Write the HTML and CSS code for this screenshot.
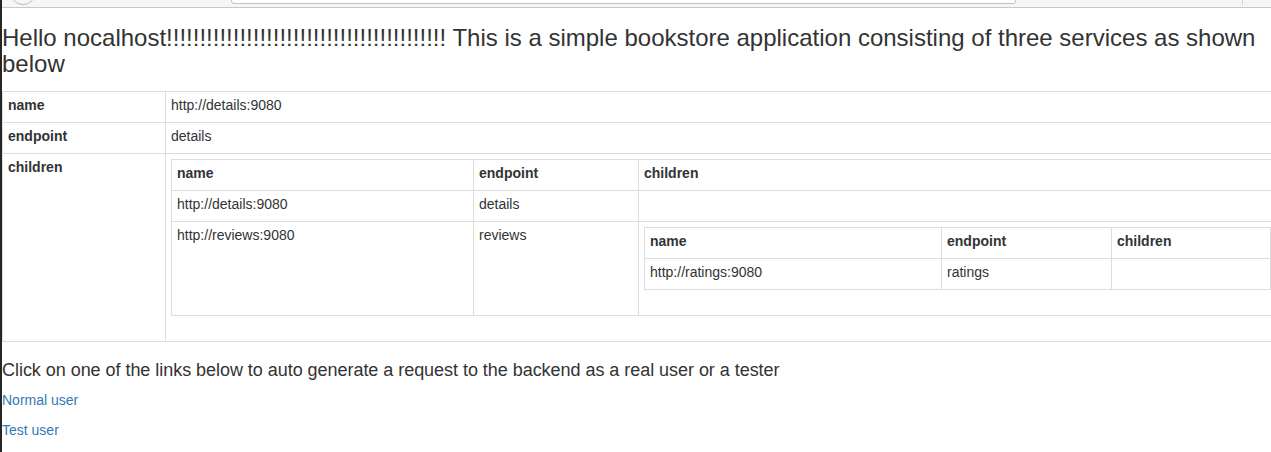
FILE: index.html
```html
<!DOCTYPE html>
<html>
<head>
<meta charset="utf-8">
<title>Bookstore</title>
<link rel="stylesheet" href="styles.css">
</head>
<body>
<div class="chrome">
  <span class="chrome-back"></span>
  <span class="chrome-url"></span>
  <span class="chrome-sep"></span>
</div>
<div class="edge"></div>
<main class="page">
  <h3 class="title">Hello nocalhost!!!!!!!!!!!!!!!!!!!!!!!!!!!!!!!!!!!!!!!!!! This is a simple bookstore application consisting of three services as shown below</h3>
  <table class="tbl outer">
    <tbody>
      <tr><th class="outer-key">name</th><td>http://details:9080</td></tr>
      <tr><th>endpoint</th><td>details</td></tr>
      <tr><th>children</th><td class="holder">
        <table class="tbl nested">
          <thead>
            <tr><th class="nested-c1">name</th><th class="nested-c2">endpoint</th><th>children</th></tr>
          </thead>
          <tbody>
            <tr><td>http://details:9080</td><td>details</td><td></td></tr>
            <tr><td>http://reviews:9080</td><td>reviews</td><td class="holder">
              <table class="tbl inner">
                <thead>
                  <tr><th class="inner-c1">name</th><th class="inner-c2">endpoint</th><th>children</th></tr>
                </thead>
                <tbody>
                  <tr><td>http://ratings:9080</td><td>ratings</td><td></td></tr>
                </tbody>
              </table>
            </td></tr>
          </tbody>
        </table>
      </td></tr>
    </tbody>
  </table>
  <h4 class="subtitle">Click on one of the links below to auto generate a request to the backend as a real user or a tester</h4>
  <p class="link-row"><a href="#">Normal user</a></p>
  <p class="link-row"><a href="#">Test user</a></p>
</main>
</body>
</html>
```
FILE: styles.css
```css
html, body {
  margin: 0;
  padding: 0;
  overflow: hidden;
  background: #fff;
}
body {
  font-family: "Liberation Sans", Arial, Helvetica, sans-serif;
  font-size: 14px;
  line-height: 1.42857143;
  color: #333;
  width: 1271px;
  height: 452px;
}

/* browser chrome sliver at the very top */
.chrome {
  height: 7px;
  background: #f6f6f6;
  border-bottom: 1px solid #c8c8c8;
  display: flex;
  align-items: flex-start;
  overflow: hidden;
}
.chrome-back {
  flex: none;
  width: 24px;
  height: 24px;
  margin: -21px 0 0 10px;
  border: 1px solid #bdbdbd;
  border-radius: 50%;
  background: #f6f6f6;
}
.chrome-url {
  flex: none;
  width: 783px;
  height: 24px;
  margin: -22px 0 0 195px;
  border: 1px solid #c2c2c2;
  border-radius: 3px;
  background: #fff;
}
.chrome-sep {
  flex: none;
  width: 1px;
  height: 5px;
  margin-left: 226px;
  background: #cfcfcf;
}

/* dark edge of the neighbouring window on the left */
.edge {
  position: fixed;
  left: 0;
  top: 0;
  width: 2px;
  height: 100%;
  background: #262626;
  z-index: 5;
}

.page {
  margin-left: 2px;
  width: 1281px;
}

.title {
  font-size: 24px;
  font-weight: 500;
  line-height: 1.1;
  margin: 17px 0 13px;
}

.subtitle {
  font-size: 18px;
  font-weight: 500;
  line-height: 1.1;
  letter-spacing: -0.04px;
  margin: 10px 0 9px;
}

.link-row {
  margin: 0 0 10px;
}
.link-row a {
  color: #337ab7;
  text-decoration: none;
}

.tbl {
  border-collapse: collapse;
  border-spacing: 0;
  width: 100%;
  table-layout: fixed;
  margin-bottom: 20px;
}
.tbl th,
.tbl td {
  box-sizing: border-box;
  padding: 3px 5px 7px;
  text-align: left;
  vertical-align: top;
  border: 1px solid #ddd;
  line-height: 1.42857143;
}
.tbl th {
  font-weight: bold;
}
.tbl td.holder {
  padding: 5px;
}
.outer {
  border-left: 1px solid #ddd;
  margin-bottom: 19px;
}
.outer-key { width: 163px; }
.nested-c1 { width: 302px; }
.nested-c2 { width: 165px; }
.inner-c1 { width: 297px; }
.inner-c2 { width: 170px; }
```
